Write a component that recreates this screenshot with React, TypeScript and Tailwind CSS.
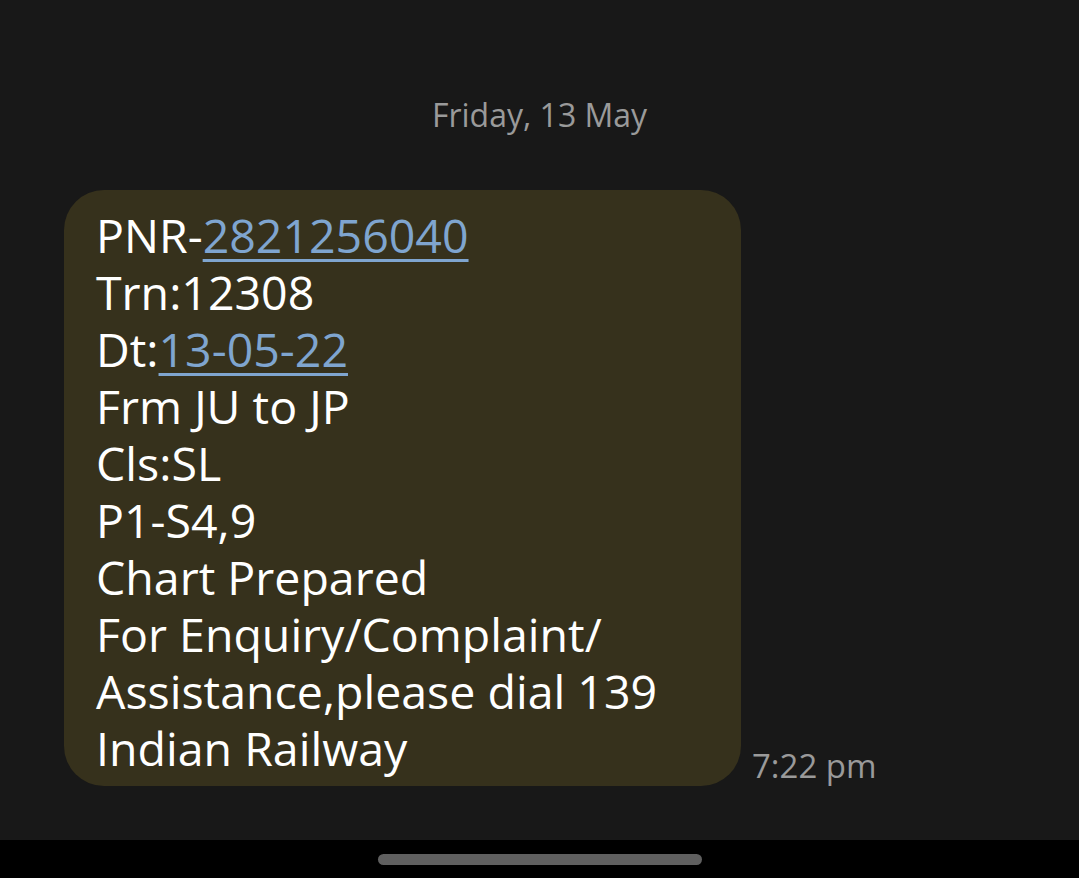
import React from "react";

const Link = ({ children }: { children: React.ReactNode }) => (
  <span className="text-[#7fa5cf] underline decoration-[3px] underline-offset-[6px]">{children}</span>
);

export default function App() {
  return (
    <div className="w-[1079px] h-[878px] flex flex-col bg-[#181818] overflow-hidden" style={{ fontFamily: '"Open Sans", sans-serif' }}>
      <div className="flex-1 flex flex-col">
        <div className="h-[190px] pt-[94px] text-center text-[32px] leading-[42px] text-[#9a9a9a]">Friday, 13 May</div>
        <div className="flex items-end pl-[64px]">
          <div className="w-[677px] h-[596px] rounded-[40px] bg-[#36311c] pl-[32px] pt-[17px] text-[46.5px] leading-[57px] text-white">
            <div>PNR-<Link>2821256040</Link></div>
            <div>Trn:12308</div>
            <div>Dt:<Link>13-05-22</Link></div>
            <div>Frm JU to JP</div>
            <div>Cls:SL</div>
            <div>P1-S4,9</div>
            <div>Chart Prepared</div>
            <div>For Enquiry/Complaint/</div>
            <div>Assistance,please dial 139</div>
            <div>Indian Railway</div>
          </div>
          <div className="ml-[11px] mb-[0px] text-[33px] leading-[40px] text-[#9a9a9a]">7:22 pm</div>
        </div>
      </div>
      <div className="h-[38px] bg-black flex items-center justify-center">
        <div className="w-[324px] h-[11px] rounded-full bg-[#606060]" />
      </div>
    </div>
  );
}
